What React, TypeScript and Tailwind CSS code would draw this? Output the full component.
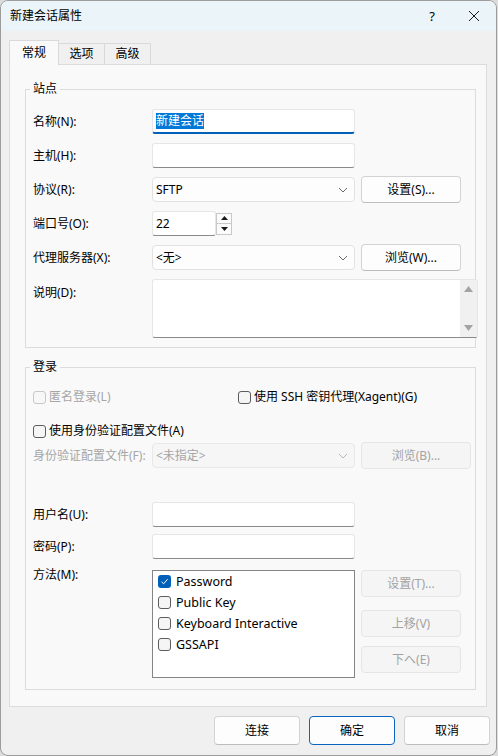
import React from "react";

// Win11-style "session properties" dialog

function Check({ checked = false, disabled = false }: { checked?: boolean; disabled?: boolean }) {
  if (checked) {
    return (
      <span className="w-[13px] h-[13px] shrink-0 rounded-[3px] bg-[#005fb8] flex items-center justify-center">
        <svg width="9" height="9" viewBox="0 0 9 9">
          <path d="M1.5 4.8 L3.6 6.8 L7.6 2.2" fill="none" stroke="#ffffff" strokeWidth="1" />
        </svg>
      </span>
    );
  }
  return (
    <span
      className={`w-[13px] h-[13px] shrink-0 rounded-[3px] border ${
        disabled ? "border-[#c8c8c8] bg-[#f7f7f7]" : "border-[#5d5d5d] bg-[#f5f5f5]"
      }`}
    />
  );
}

function TextInput({ w = "w-[203px]", children, focused = false }: { w?: string; children?: React.ReactNode; focused?: boolean }) {
  return (
    <div
      className={`${w} h-[25px] shrink-0 bg-white rounded-[3px] border border-[#e6e6e6] flex items-center pl-[3px] ${
        focused ? "border-b-2 border-b-[#005fb8]" : "border-b-[#8a8a8a]"
      }`}
    >
      {children}
    </div>
  );
}

function Combo({ text, disabled = false }: { text: string; disabled?: boolean }) {
  return (
    <div
      className={`w-[203px] h-[25px] shrink-0 rounded-[4px] border flex items-center justify-between pl-[3px] pr-[6px] ${
        disabled ? "bg-[#f6f6f6] border-[#e8e8e8] text-[#a4a4a4]" : "bg-[#fdfdfd] border-[#e2e2e2] text-black"
      }`}
    >
      <span>{text}</span>
      <svg width="10" height="6" viewBox="0 0 10 6">
        <path d="M1 1 L5 5 L9 1" fill="none" stroke={disabled ? "#b8b8b8" : "#6a6a6a"} strokeWidth="1" />
      </svg>
    </div>
  );
}

function Btn({
  label,
  disabled = false,
  primary = false,
  w = "w-[100px]",
  h = "h-[27px]",
}: {
  label: string;
  disabled?: boolean;
  primary?: boolean;
  w?: string;
  h?: string;
}) {
  let tone = "bg-[#fdfdfd] border-[#d3d3d3] border-b-[#bdbdbd] text-black";
  if (disabled) tone = "bg-[#f5f5f5] border-[#e5e5e5] text-[#a3a3a3]";
  if (primary) tone = "bg-[#fdfdfd] border-[#0a64c0] text-black";
  return (
    <div className={`${w} ${h} shrink-0 rounded-[4px] border flex items-center justify-center ${tone}`}>{label}</div>
  );
}

function Row({ label, children, disabled = false }: { label: string; children: React.ReactNode; disabled?: boolean }) {
  return (
    <div className="flex items-center h-[25px]">
      <div className={`w-[119px] shrink-0 ${disabled ? "text-[#a6a6a6]" : ""}`}>{label}</div>
      {children}
    </div>
  );
}

function Group({ title, children, className }: { title: string; children: React.ReactNode; className: string }) {
  return (
    <div className={`relative border border-[#dcdcdc] pl-[7px] ${className}`}>
      <span className="absolute -top-[10px] left-[4px] px-[3px] bg-[#f9f9f9] leading-[18px]">{title}</span>
      {children}
    </div>
  );
}

export default function App() {
  const methods = [
    { name: "Password", on: true },
    { name: "Public Key", on: false },
    { name: "Keyboard Interactive", on: false },
    { name: "GSSAPI", on: false },
  ];

  return (
    <div className="w-[498px] h-[756px] bg-[#dcdcdc] font-['Noto_Sans','Noto_Sans_CJK_SC',sans-serif] text-[12px] leading-[18px] text-black">
      <div className="w-[497px] h-[756px] border border-[#9c9c9c] rounded-[8px] overflow-hidden bg-[#f0f0f0] flex flex-col">
        {/* title bar */}
        <div className="h-[30px] shrink-0 bg-[#ebf4f8] flex items-center pl-[9px]">
          <span className="flex-1">新建会话属性</span>
          <span className="w-[20px] text-center text-[13px] mr-[26px]">?</span>
          <svg width="12" height="12" viewBox="0 0 12 12" className="mr-[16px]">
            <path d="M1 1 L11 11 M11 1 L1 11" stroke="#1a1a1a" strokeWidth="1" />
          </svg>
        </div>

        <div className="pl-[8px] pr-[9px] pt-[9px]">
          {/* tabs */}
          <div className="flex items-end h-[24px] relative z-10">
            <div className="w-[50px] h-[25px] -mb-px bg-[#f9f9f9] border border-b-0 border-[#d9d9d9] flex items-center justify-center">
              常规
            </div>
            <div className="w-[46px] h-[21px] bg-[#f0f0f0] border border-l-0 border-b-0 border-[#d9d9d9] flex items-center justify-center">
              选项
            </div>
            <div className="w-[46px] h-[21px] bg-[#f0f0f0] border border-l-0 border-b-0 border-[#d9d9d9] flex items-center justify-center">
              高级
            </div>
          </div>

          {/* panel */}
          <div className="h-[643px] bg-[#f9f9f9] border border-[#dcdcdc] pl-[15px] pt-[24px]">
            <Group title="站点" className="w-[451px] pt-[19px] pb-[9px]">
              <div className="flex flex-col gap-[9px]">
                <Row label="名称(N):">
                  <TextInput focused>
                    <span className="bg-[#0078d7] text-white leading-[16px]">新建会话</span>
                  </TextInput>
                </Row>
                <Row label="主机(H):">
                  <TextInput />
                </Row>
                <Row label="协议(R):">
                  <Combo text="SFTP" />
                  <div className="ml-[6px]">
                    <Btn label="设置(S)..." />
                  </div>
                </Row>
                <Row label="端口号(O):">
                  <TextInput w="w-[64px]">22</TextInput>
                  <div className="w-[16px] h-[22px] flex flex-col border border-[#c9c9c9] bg-[#fbfbfb]">
                    <div className="flex-1 flex items-center justify-center border-b border-[#c9c9c9]">
                      <svg width="7" height="4" viewBox="0 0 7 4">
                        <path d="M0 4 L3.5 0 L7 4 Z" fill="#1a1a1a" />
                      </svg>
                    </div>
                    <div className="flex-1 flex items-center justify-center">
                      <svg width="7" height="4" viewBox="0 0 7 4">
                        <path d="M0 0 L3.5 4 L7 0 Z" fill="#1a1a1a" />
                      </svg>
                    </div>
                  </div>
                </Row>
                <Row label="代理服务器(X):">
                  <Combo text="<无>" />
                  <div className="ml-[6px]">
                    <Btn label="浏览(W)..." />
                  </div>
                </Row>
                <div className="flex">
                  <div className="w-[119px] shrink-0 mt-[5px]">说明(D):</div>
                  <div className="w-[326px] h-[59px] shrink-0 bg-white border border-[#e6e6e6] border-b-[#8a8a8a] rounded-[3px] flex justify-end">
                    <div className="w-[17px] bg-[#f0f0f0] flex flex-col items-center justify-between py-[6px]">
                      <svg width="9" height="6" viewBox="0 0 9 6">
                        <path d="M0 6 L4.5 0 L9 6 Z" fill="#a3a3a3" />
                      </svg>
                      <svg width="9" height="6" viewBox="0 0 9 6">
                        <path d="M0 0 L4.5 6 L9 0 Z" fill="#a3a3a3" />
                      </svg>
                    </div>
                  </div>
                </div>
              </div>
            </Group>

            <Group title="登录" className="w-[451px] mt-[19px] pt-[20px] pb-[11px]">
              <div className="flex items-center h-[18px]">
                <div className="w-[205px] flex items-center gap-[3px] text-[#a6a6a6]">
                  <Check disabled />
                  <span>匿名登录(L)</span>
                </div>
                <div className="flex items-center gap-[3px]">
                  <Check />
                  <span>使用 SSH 密钥代理(Xagent)(G)</span>
                </div>
              </div>
              <div className="flex items-center gap-[3px] h-[18px] mt-[16px]">
                <Check />
                <span>使用身份验证配置文件(A)</span>
              </div>
              <div className="mt-[3px]">
                <Row label="身份验证配置文件(F):" disabled>
                  <Combo text="<未指定>" disabled />
                  <div className="ml-[6px]">
                    <Btn label="浏览(B)..." disabled w="w-[110px]" />
                  </div>
                </Row>
              </div>
              <div className="mt-[34px] flex flex-col gap-[7px]">
                <Row label="用户名(U):">
                  <TextInput />
                </Row>
                <Row label="密码(P):">
                  <TextInput />
                </Row>
              </div>
              <div className="flex mt-[11px]">
                <div className="w-[119px] shrink-0 mt-[-4px]">方法(M):</div>
                <div className="w-[203px] h-[108px] shrink-0 bg-white border border-[#858585] pl-[5px] text-[12.5px]">
                  {methods.map((m) => (
                    <div key={m.name} className="h-[21px] flex items-center gap-[5px]">
                      <Check checked={m.on} />
                      <span>{m.name}</span>
                    </div>
                  ))}
                </div>
                <div className="ml-[6px] flex flex-col">
                  <Btn label="设置(T)..." disabled />
                  <div className="mt-[13px]">
                    <Btn label="上移(V)" disabled />
                  </div>
                  <div className="mt-[9px]">
                    <Btn label="下へ(E)" disabled />
                  </div>
                </div>
              </div>
            </Group>
          </div>
        </div>

        {/* dialog buttons */}
        <div className="flex justify-end gap-[9px] pr-[6px] mt-[9px]">
          <Btn label="连接" w="w-[86px]" h="h-[29px]" />
          <Btn label="确定" w="w-[86px]" h="h-[29px]" primary />
          <Btn label="取消" w="w-[86px]" h="h-[29px]" />
        </div>
      </div>
    </div>
  );
}
